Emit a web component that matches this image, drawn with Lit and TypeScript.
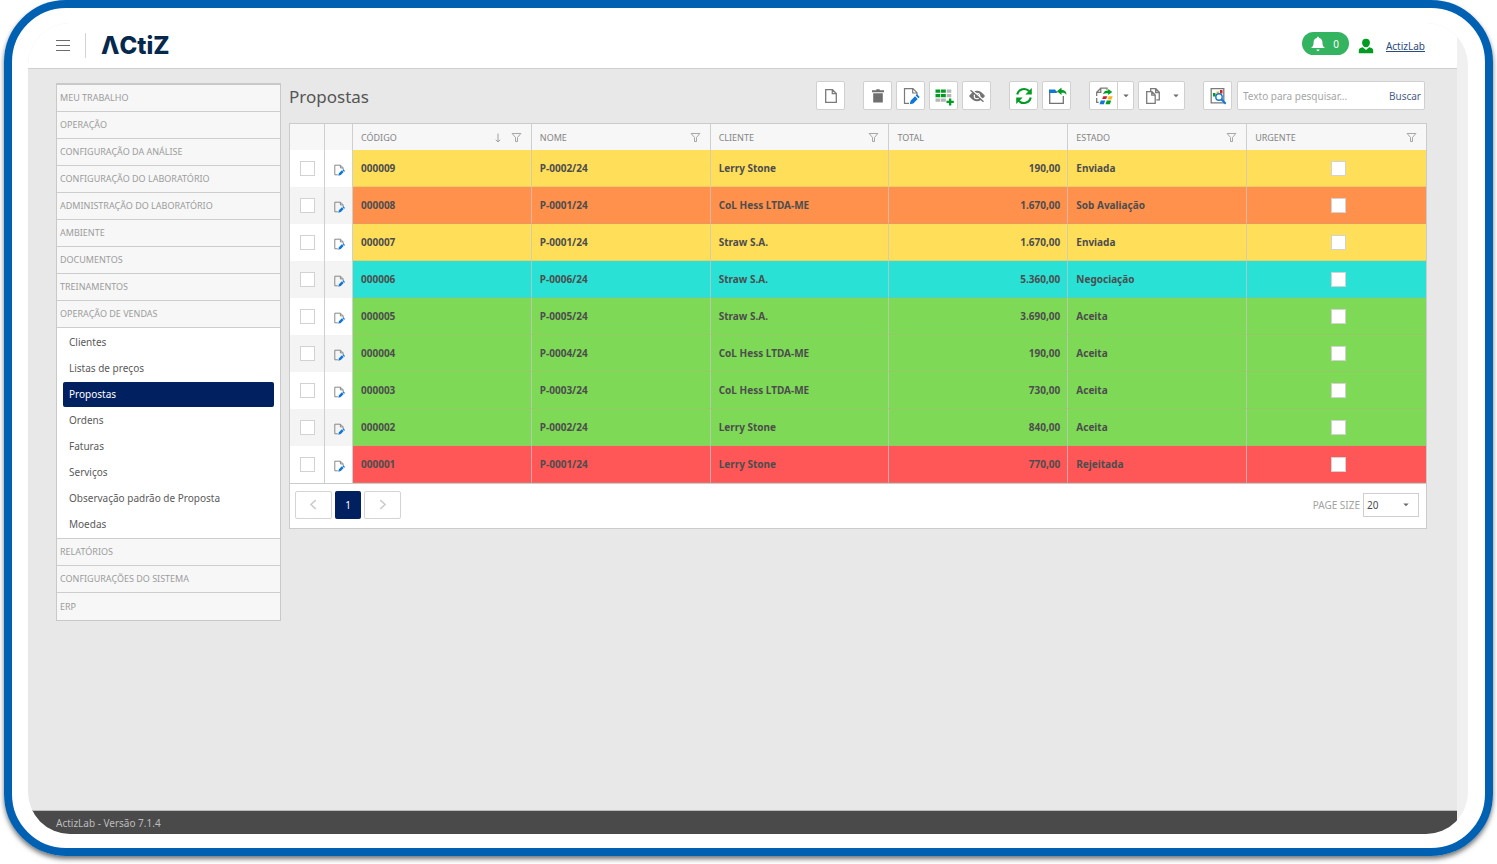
import { LitElement, html, css, svg, nothing } from "lit";
import { customElement, state } from "lit/decorators.js";
import { classMap } from "lit/directives/class-map.js";

interface Proposal {
  code: string;
  name: string;
  client: string;
  total: string;
  status: string;
}

const PROPOSALS: Proposal[] = [
  { code: "000009", name: "P-0002/24", client: "Lerry Stone", total: "190,00", status: "Enviada" },
  { code: "000008", name: "P-0001/24", client: "CoL Hess LTDA-ME", total: "1.670,00", status: "Sob Avaliação" },
  { code: "000007", name: "P-0001/24", client: "Straw S.A.", total: "1.670,00", status: "Enviada" },
  { code: "000006", name: "P-0006/24", client: "Straw S.A.", total: "5.360,00", status: "Negociação" },
  { code: "000005", name: "P-0005/24", client: "Straw S.A.", total: "3.690,00", status: "Aceita" },
  { code: "000004", name: "P-0004/24", client: "CoL Hess LTDA-ME", total: "190,00", status: "Aceita" },
  { code: "000003", name: "P-0003/24", client: "CoL Hess LTDA-ME", total: "730,00", status: "Aceita" },
  { code: "000002", name: "P-0002/24", client: "Lerry Stone", total: "840,00", status: "Aceita" },
  { code: "000001", name: "P-0001/24", client: "Lerry Stone", total: "770,00", status: "Rejeitada" },
];

const STATUS_CLASS: Record<string, string> = {
  Enviada: "sent",
  "Sob Avaliação": "review",
  "Negociação": "deal",
  Aceita: "accepted",
  Rejeitada: "rejected",
};

const GROUPS_BEFORE = [
  "MEU TRABALHO",
  "OPERAÇÃO",
  "CONFIGURAÇÃO DA ANÁLISE",
  "CONFIGURAÇÃO DO LABORATÓRIO",
  "ADMINISTRAÇÃO DO LABORATÓRIO",
  "AMBIENTE",
  "DOCUMENTOS",
  "TREINAMENTOS",
  "OPERAÇÃO DE VENDAS",
];
const SALES_ITEMS = [
  "Clientes",
  "Listas de preços",
  "Propostas",
  "Ordens",
  "Faturas",
  "Serviços",
  "Observação padrão de Proposta",
  "Moedas",
];
const GROUPS_AFTER = ["RELATÓRIOS", "CONFIGURAÇÕES DO SISTEMA", "ERP"];

const COLUMNS = [
  { label: "CÓDIGO", sorted: true, filter: true },
  { label: "NOME", sorted: false, filter: true },
  { label: "CLIENTE", sorted: false, filter: true },
  { label: "TOTAL", sorted: false, filter: false },
  { label: "ESTADO", sorted: false, filter: true },
  { label: "URGENTE", sorted: false, filter: true },
];

const icon = (content: unknown, size = 20) => html`
  <svg class="icon" width=${size} height=${size} viewBox="0 0 20 20" aria-hidden="true">${content}</svg>
`;

const ICONS = {
  page: svg`<path d="M4.700 3.700h6.800l3.800 3.800v8.800H4.700z M11.300 3.900v3.800h3.800" fill="none" stroke="#7a7a7a" stroke-width="1.300"/>`,
  trash: svg`<path d="M4 4.200h4.300V3.200h3.400v1h4.300v2H4z M5.200 7.200h9.600v9.300H5.200z" fill="#6f6f6f"/>`,
  edit: svg`
    <path d="M8 17.300H3.500V2.700h8.500l4 4v2.300 M11.700 3v4h4" fill="none" stroke="#7a7a7a" stroke-width="1.200"/>
    <path d="M16 8.300l2.700 2.700-1.300 1.300-2.700-2.700z M14 10.300l2.700 2.700-4.400 4.400-3.600.900.900-3.600z" fill="#1177d7"/>`,
  pen: svg`
    <path d="M8 18H3V2h9.500l4.300 4.300v2.200 M12.300 2.500v4h4" fill="none" stroke="#7a7a7a" stroke-width="1.500"/>
    <path d="M17 8.500l3 3-1.300 1.300-3-3z M14.800 10.500l3 3-4.800 5-4.200 1 1-4.200z" fill="#1177d7"/>`,
  gridAdd: svg`
    <path d="M1.500 3.500h4.800v3.200H1.500z M7 3.500h4.800v3.200H7z M1.500 8h4.800v3.200H1.500z M7 8h4.800v3.200H7z" fill="#039c23"/>
    <path d="M12.700 3.500h4.600v3.200h-4.600z M12.700 8h4.600v3.200h-4.600z M1.500 12.500h4.800v3.200H1.500z M7 12.500h4.800v3.200H7z" fill="#b5b5b5"/>
    <path d="M15 12.500h2.300v2.300h2.500v2.300h-2.500v2.400H15v-2.400h-2.500v-2.300H15z" fill="#039c23"/>`,
  hidden: svg`
    <path d="M2 10q8-10.500 16 0q-8 10.500-16 0z" fill="#737373"/>
    <circle cx="10" cy="10" r="3.300" fill="#fff"/><circle cx="10" cy="10" r="2.200" fill="#737373"/>
    <path d="M4.500 3.500l13 11.500" stroke="#fff" stroke-width="1.500"/>
    <path d="M3.500 4.300l13 11.500" stroke="#737373" stroke-width="1.400"/>`,
  refresh: svg`
    <path d="M3.300 8.600A7 7 0 0 1 15.300 5.300 M16.700 11.400A7 7 0 0 1 4.700 14.700" fill="none" stroke="#039c23" stroke-width="2.200"/>
    <path d="M17.800 2v6.500h-6.500z M2.200 18v-6.500h6.500z" fill="#039c23"/>`,
  folderOut: svg`
    <path d="M10.500 6H2.700v11.300h13.600V10" fill="none" stroke="#737373" stroke-width="1.300"/>
    <path d="M2 3.500h6l1.500 2v1.500H2z" fill="#1177d7"/>
    <path d="M14.500 1.500v2.200c3.500.3 5 2.200 5 5.100-1.400-1.700-2.800-2-5-2V9L10 5.200z" fill="#039c23"/>`,
  report: svg`
    <path d="M4.700 16.300H2.700V12 M2.700 10V6.200l4.100-4H13v1.500 M6.800 2.500v3.800H3" fill="none" stroke="#7a7a7a" stroke-width="1.300"/>
    <path d="M9 8.300c.8-3 2.600-3.900 5.200-3.800V3l4 3-4 3V7.400C12 7.200 10.300 7.400 9 8.300z" fill="#039c23"/>
    <path d="M9.300 10.300h4l-1.200 2.700h-4z" fill="#d0202a"/><path d="M14.800 10.300h3.900l-1.200 3.200h-3.900z" fill="#ffb115"/>
    <path d="M6.800 14.500h4.400l-1.300 3.800H5.500z" fill="#1177d7"/><path d="M12.800 14.500h4.400l-1.300 3.800h-4.400z" fill="#039c23"/>`,
  copy: svg`
    <path d="M2.700 5.700h5.300l3.200 3.200v8.400H2.700z M7.800 5.900v3.300h3.300" fill="none" stroke="#7a7a7a" stroke-width="1.300"/>
    <path d="M6.700 5V2.700h5.100l3.500 3.500v7.600h-3 M11.600 2.900v3.600h3.600" fill="none" stroke="#7a7a7a" stroke-width="1.300"/>`,
  preview: svg`
    <path d="M3.200 2.700h12.600v14.100H3.200z" fill="#fff" stroke="#7a7a7a" stroke-width="1.300"/>
    <path d="M5 7H7.500V10.500H5z" fill="#039c23"/><path d="M8.500 5.500H11v2H8.500z" fill="#ffb115"/>
    <path d="M12 4h2.500v3.500H12z" fill="#d0202a"/>
    <circle cx="11" cy="11" r="3.200" fill="#fff" stroke="#1177d7" stroke-width="1.400"/>
    <path d="M13.300 13.300l4.400 4.400" stroke="#1177d7" stroke-width="2"/>`,
  funnel: svg`<path d="M2 2.700h16l-6.200 7.200v7.400H8.200V9.900z" fill="none" stroke="#a5a5a5" stroke-width="1.800"/>`,
  sort: svg`<path d="M10 1v16 M5.500 13.500l4.500 4.500 4.500-4.500" fill="none" stroke="#a0a0a0" stroke-width="2"/>`,
  left: svg`<path d="M13.500 3L6 10l7.500 7" fill="none" stroke="#c8c8c8" stroke-width="2.200"/>`,
  right: svg`<path d="M6.500 3L14 10l-7.500 7" fill="none" stroke="#c8c8c8" stroke-width="2.200"/>`,
  caret: svg`<path d="M1 5h18L10 14z" fill="#6a6a6a"/>`,
  bell: svg`
    <path d="M10 1c.9 0 1.300.6 1.300 1.400 2.900.6 4.200 2.600 4.200 5.400 0 4 1 5.500 3.300 7.200H1.200C3.500 13.300 4.500 11.800 4.500 7.800c0-2.800 1.300-4.800 4.200-5.400C8.700 1.600 9.100 1 10 1z M8 17h4q-.4 2-2 2T8 17z" fill="#fff"/>`,
  user: svg`
    <path d="M10 1c3.200 0 4.900 2 4.900 5 0 2.700-1.600 5.700-4.900 5.700S5.100 8.700 5.100 6c0-3 1.700-5 4.900-5z" fill="#039c23"/>
    <path d="M1 19v-3.500c0-2 2-3.300 5-3.800L10 15l4-3.300c3 .5 5 1.800 5 3.800V19z" fill="#039c23"/>`,
};

@customElement("app-root")
export class AppRoot extends LitElement {
  @state() private current = "Propostas";

  static styles = css`
    :host {
      display: flex;
      box-sizing: border-box;
      min-height: 100vh;
      padding: 0 4px 8px;
      background: #fff;
      color: #4d4d4d;
      font: 10px/16px "Noto Sans", "Open Sans", sans-serif;
    }
    *, *::before { box-sizing: border-box; }
    button, input, select { font: inherit; color: inherit; margin: 0; }
    button { cursor: pointer; padding: 0; }
    .icon { display: block; flex: none; }

    .frame {
      display: flex;
      flex: 1;
      min-width: 0;
      padding: 15px 17px 14px 16px;
      border: 8px solid #0061b2;
      border-radius: 62px;
      box-shadow: 0 3px 5px rgba(0, 0, 0, 0.55);
    }
    .screen {
      display: flex;
      flex: 1;
      min-width: 0;
      padding-right: 11px;
      overflow: hidden;
      border-radius: 42px;
      background: linear-gradient(to left, #f0f0f0 11px, #fff 11px);
    }
    .app {
      display: flex;
      flex: 1;
      flex-direction: column;
      min-width: 0;
      background: #e8e8e8;
    }

    .top {
      display: flex;
      align-items: center;
      height: 46px;
      padding: 0 32px 0 28px;
      border-bottom: 1px solid #cfcfcf;
      background: #fff;
    }
    .burger {
      display: grid;
      gap: 4px;
      width: 14px;
      border: 0;
      background: none;
    }
    .burger span { height: 1px; background: #6b6b6b; }
    .brand {
      margin-left: 15px;
      padding-left: 15px;
      border-left: 1px solid #d4d4d4;
      color: #06284c;
      font: 800 24px/25px Inter, sans-serif;
    }
    .account { display: flex; align-items: center; margin-left: auto; }
    .alerts {
      display: flex;
      align-items: center;
      gap: 7px;
      height: 23px;
      margin: 0 9px 4px 0;
      padding: 0 10px 0 8px;
      border: 0;
      border-radius: 12px;
      background: #34b360;
      color: #fff;
    }
    .account a { margin-left: 12px; color: #2b4a7d; }

    .body { display: flex; flex: 1; gap: 8px; padding: 12px 30px 24px 28px; }
    .side {
      flex: none;
      align-self: flex-start;
      width: 225px;
      margin-top: 2px;
      border: 1px solid #c9c9c9;
      border-top-width: 2px;
    }
    .group {
      display: block;
      width: 100%;
      height: 27px;
      padding: 0 3px;
      border: 0;
      border-bottom: 1px solid #cdcdcd;
      background: #f7f7f7;
      color: #9c9c9c;
      font-size: 9px;
      text-align: left;
    }
    .items {
      display: grid;
      gap: 1px;
      margin: 0;
      padding: 2px 6px 1px;
      border-bottom: 1px solid #cdcdcd;
      background: #fff;
      list-style: none;
    }
    .group:last-child { border-bottom: 0; }
    .item {
      display: block;
      padding: 4px 6px 5px;
      border-radius: 2px;
      color: #5a5a5a;
      text-decoration: none;
    }
    .item.active { background: #00205f; color: #fff; }

    .main { flex: 1; min-width: 0; }
    .bar { display: flex; align-items: center; padding-right: 2px; }
    h1 {
      margin: 0 auto 0 0;
      padding-top: 2px;
      color: #555;
      font-size: 17px;
      font-weight: 400;
      line-height: 27px;
    }
    .tools { display: flex; gap: 4px; margin-right: 18px; }
    .tool {
      display: flex;
      align-items: center;
      justify-content: center;
      width: 29px;
      height: 29px;
      border: 1px solid #d0d0d0;
      border-radius: 2px;
      background: #fff;
    }
    .split { display: flex; }
    .split .tool:first-child { border-radius: 2px 0 0 2px; }
    .split .tool + .tool { width: 17px; margin-left: -1px; border-radius: 0 2px 2px 0; }
    .tool.wide { gap: 9px; width: 47px; }
    .preview { margin-right: 5px; }
    .search {
      display: flex;
      align-items: center;
      width: 188px;
      height: 29px;
      border: 1px solid #d0d0d0;
      border-radius: 2px;
      background: #fff;
    }
    .search input {
      flex: 1;
      min-width: 0;
      padding: 0 5px;
      border: 0;
      outline: 0;
      background: none;
    }
    .search input::placeholder { color: #a6a6a6; }
    .search button { padding-right: 3px; border: 0; background: none; color: #4b5f86; }

    .card { margin-top: 13px; border: 1px solid #cbcbcb; background: #fff; }
    table { width: 100%; border-spacing: 0; table-layout: fixed; }
    .pick { width: 35px; }
    .pen { width: 28px; }
    th {
      height: 26px;
      padding: 1px 8px 0;
      border-right: 1px solid #cfcfcf;
      background: #f7f7f7;
      color: #858585;
      font-size: 9px;
      font-weight: 400;
      text-align: left;
    }
    .head { display: flex; align-items: center; gap: 8px; }
    .head span { flex: 1; }
    .head .icon:last-child { margin-right: 1px; }
    td {
      height: 37px;
      padding: 0 8px;
      border-right: 1px solid #cfcfcf;
      font-weight: 700;
    }
    th:last-child, td:last-child { border-right: 0; }
    td:last-child { padding: 0 4px 0 8px; }
    .data { border-right-color: rgba(200, 200, 200, 0.7); border-bottom: 1px solid rgba(190, 170, 130, 0.3); }
    tbody tr:nth-child(even) { background: #f4f4f4; }
    td.tight { padding: 0; }
    .tight .icon, .tight input { margin: 0 auto; }
    .edit { display: block; width: 100%; padding: 2px 0 0 1px; border: 0; background: none; }
    .money { text-align: right; padding-right: 7px; }
    .sent { background: #ffde59; }
    .review { background: #ff914d; }
    .deal { background: #29e1d5; }
    .accepted { background: #7ed957; }
    .rejected { background: #ff5757; }
    input[type="checkbox"] {
      display: block;
      width: 15px;
      height: 15px;
      margin: 0 auto;
      border: 1px solid #d2d2d2;
      background: #fff;
      appearance: none;
    }

    .pager {
      display: flex;
      align-items: center;
      gap: 3px;
      height: 45px;
      padding: 0 7px 3px 5px;
      border-top: 1px solid #cbcbcb;
    }
    .pager button {
      display: flex;
      align-items: center;
      justify-content: center;
      width: 37px;
      height: 28px;
      border: 1px solid #d4d4d4;
      border-radius: 2px;
      background: #fff;
    }
    .pager button.page { width: 26px; border: 0; background: #00205f; color: #fff; }
    .pager label { margin-left: auto; color: #a3a3a3; }
    .size { position: relative; }
    .size select {
      display: block;
      width: 56px;
      height: 24px;
      padding: 0 3px;
      border: 1px solid #cfcfcf;
      border-radius: 0;
      background: #fff;
      appearance: none;
    }
    .size .icon { position: absolute; top: 9px; right: 10px; pointer-events: none; }

    footer {
      height: 24px;
      padding: 4px 28px 3px;
      border-top: 1px solid #b9bdb9;
      background: #4a4a4a;
      color: #bdbdbd;
    }
  `;

  private tool(name: string, glyph: unknown) {
    return html`<button class="tool" aria-label=${name} title=${name}>${icon(glyph)}</button>`;
  }

  private group(label: string) {
    return html`<button class="group">${label}</button>`;
  }

  private row(p: Proposal) {
    const data = { data: true, [STATUS_CLASS[p.status]]: true };
    const cls = classMap(data);
    return html`
      <tr>
        <td class="tight"><input type="checkbox" aria-label="Selecionar ${p.code}" /></td>
        <td class="tight"><button class="edit" aria-label="Editar ${p.code}">${icon(ICONS.pen, 12)}</button></td>
        <td class=${cls}>${p.code}</td>
        <td class=${cls}>${p.name}</td>
        <td class=${cls}>${p.client}</td>
        <td class=${classMap({ ...data, money: true })}>${p.total}</td>
        <td class=${cls}>${p.status}</td>
        <td class=${cls}><input type="checkbox" aria-label="Urgente ${p.code}" /></td>
      </tr>
    `;
  }

  render() {
    return html`
      <div class="frame">
        <div class="screen">
          <div class="app">
            <header class="top">
              <button class="burger" aria-label="Menu"><span></span><span></span><span></span></button>
              <div class="brand">ΛCtiZ</div>
              <div class="account">
                <button class="alerts" aria-label="Notificações">${icon(ICONS.bell, 16)}<span>0</span></button>
                ${icon(ICONS.user, 16)}
                <a href="#conta">ActizLab</a>
              </div>
            </header>
            <div class="body">
              <nav class="side">
                ${GROUPS_BEFORE.map((g) => this.group(g))}
                <ul class="items">
                  ${SALES_ITEMS.map(
                    (label) => html`<li>
                      <a
                        href="#vendas"
                        class=${classMap({ item: true, active: label === this.current })}
                        @click=${() => (this.current = label)}
                        >${label}</a
                      >
                    </li>`
                  )}
                </ul>
                ${GROUPS_AFTER.map((g) => this.group(g))}
              </nav>
              <main class="main">
                <div class="bar">
                  <h1>Propostas</h1>
                  <div class="tools">${this.tool("Novo", ICONS.page)}</div>
                  <div class="tools">
                    ${this.tool("Excluir", ICONS.trash)} ${this.tool("Editar", ICONS.edit)}
                    ${this.tool("Adicionar", ICONS.gridAdd)} ${this.tool("Ocultar", ICONS.hidden)}
                  </div>
                  <div class="tools">
                    ${this.tool("Atualizar", ICONS.refresh)} ${this.tool("Exportar", ICONS.folderOut)}
                  </div>
                  <div class="tools">
                    <div class="split">
                      ${this.tool("Relatório", ICONS.report)}
                      <button class="tool" aria-label="Opções de relatório">${icon(ICONS.caret, 6)}</button>
                    </div>
                    <button class="tool wide" aria-label="Copiar">
                      ${icon(ICONS.copy)}${icon(ICONS.caret, 6)}
                    </button>
                  </div>
                  <div class="preview">${this.tool("Visualizar", ICONS.preview)}</div>
                  <form class="search" @submit=${(e: Event) => e.preventDefault()}>
                    <input type="text" aria-label="Texto para pesquisar" placeholder="Texto para pesquisar..." />
                    <button type="submit">Buscar</button>
                  </form>
                </div>
                <section class="card">
                  <table>
                    <thead>
                      <tr>
                        <th class="pick"></th>
                        <th class="pen"></th>
                        ${COLUMNS.map(
                          (c) => html`<th>
                            <div class="head">
                              <span>${c.label}</span>
                              ${c.sorted ? icon(ICONS.sort, 10) : nothing}
                              ${c.filter ? icon(ICONS.funnel, 11) : nothing}
                            </div>
                          </th>`
                        )}
                      </tr>
                    </thead>
                    <tbody>
                      ${PROPOSALS.map((p) => this.row(p))}
                    </tbody>
                  </table>
                  <div class="pager">
                    <button aria-label="Página anterior">${icon(ICONS.left, 13)}</button>
                    <button class="page">1</button>
                    <button aria-label="Próxima página">${icon(ICONS.right, 13)}</button>
                    <label for="size">PAGE SIZE</label>
                    <div class="size">
                      <select id="size">
                        <option>20</option>
                        <option>50</option>
                      </select>
                      ${icon(ICONS.caret, 6)}
                    </div>
                  </div>
                </section>
              </main>
            </div>
            <footer>ActizLab - Versão 7.1.4</footer>
          </div>
        </div>
      </div>
    `;
  }
}
